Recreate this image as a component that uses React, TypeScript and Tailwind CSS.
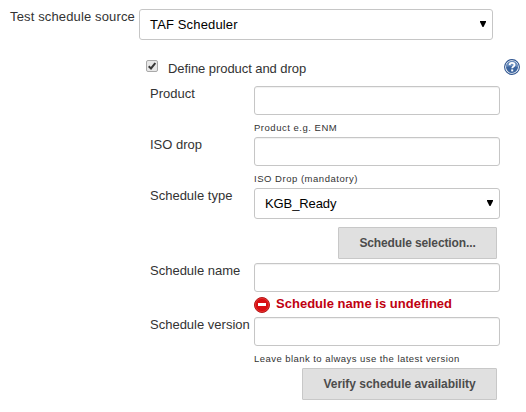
import type { ReactNode } from "react";

function Row({ label, className, children }: { label: string; className: string; children: ReactNode }) {
  return (
    <div className={`flex ${className}`}>
      <div className="w-[104px] shrink-0 whitespace-nowrap leading-4">{label}</div>
      <div className="w-[246px]">{children}</div>
    </div>
  );
}

function Select({ value, className }: { value: string; className: string }) {
  return (
    <div
      className={`flex h-[31px] items-center justify-between rounded-[3px] border border-[#c6c6c6] bg-white pl-[10px] pr-[6px] text-black ${className}`}
    >
      <span className="leading-4">{value}</span>
      <svg width="6" height="6" viewBox="0 0 6 6" className="mb-[2px]">
        <path d="M0 0h6v1L3.5 6h-1L0 1z" fill="#000" />
      </svg>
    </div>
  );
}

function Input() {
  return (
    <input className="block h-[29px] w-[246px] rounded-[3px] border border-[#c6c6c6] bg-white px-2 shadow-[inset_0_1px_1px_rgba(0,0,0,0.06)] outline-none" />
  );
}

function Hint({ children, className }: { children: string; className: string }) {
  return <div className={`mt-[7px] whitespace-nowrap text-[9.5px] leading-[12px] ${className}`}>{children}</div>;
}

function Button({ children, className }: { children: string; className: string }) {
  return (
    <button
      className={`block h-8 rounded-[1px] border border-[#c8c8c8] bg-[#e0e0e0] text-[12px] font-bold leading-4 text-[#4c4c4c] ${className}`}
    >
      {children}
    </button>
  );
}

function HelpIcon() {
  return (
    <svg width="16" height="16" viewBox="0 0 16 16" className="mt-[-1px]">
      <circle cx="8" cy="8" r="7.4" fill="#fff" stroke="#2f5590" strokeWidth="1.1" />
      <circle cx="8" cy="8" r="6" fill="#3c659f" />
      <path d="M2 8a6 6 0 0 1 12 0c-3-1.5-8-1.5-12 0z" fill="#6c8fbe" />
      <path d="M5.6 6.1C5.7 4.4 6.6 3.8 8 3.8s2.5.8 2.5 2.1c0 1.6-2.3 1.7-2.3 3.4" fill="none" stroke="#fff" strokeWidth="1.8" />
      <path d="M7.2 10.4h2v2h-2z" fill="#fff" />
    </svg>
  );
}

function ErrorIcon() {
  return (
    <svg width="16" height="16" viewBox="0 0 16 16" className="mt-px shrink-0">
      <circle cx="8" cy="8" r="7.5" fill="#d90d12" stroke="#b5191b" />
      <circle cx="8" cy="8" r="6.6" fill="none" stroke="#e8483e" strokeWidth="0.6" />
      <path d="M4 6h8v3H4z" fill="#fff" />
    </svg>
  );
}

export default function App() {
  return (
    <div className="h-[412px] w-[526px] overflow-hidden bg-white font-['Liberation_Sans',Arial,sans-serif] text-[13px] text-[#333]">
      <div className="flex pl-[10px] pt-[9px]">
        <div className="w-[129px] shrink-0 whitespace-nowrap leading-4 tracking-[0.14px]">Test schedule source</div>
        <Select value="TAF Scheduler" className="w-[354px] tracking-[0.15px]" />
      </div>

      <div className="mt-5 flex h-[26px] pl-[146px]">
        <div className="flex h-3 w-3 items-center justify-center rounded-[2px] border border-[#a9a9a9] bg-[#e8e8e8]">
          <svg width="8" height="8" viewBox="0 0 8 8">
            <path d="M.7 4.2 3 6.4 7.3 1" fill="none" stroke="#383838" strokeWidth="2" />
          </svg>
        </div>
        <span className="ml-[10px] w-[336px] leading-[18px] tracking-[-0.06px]">Define product and drop</span>
        <HelpIcon />
      </div>

      <div className="pl-[150px]">
        <Row label="Product" className="h-[51px]">
          <Input />
          <Hint className="tracking-[0.52px]">Product e.g. ENM</Hint>
        </Row>
        <Row label="ISO drop" className="h-[51px]">
          <Input />
          <Hint className="tracking-[0.52px]">ISO Drop (mandatory)</Hint>
        </Row>
        <Row label="Schedule type" className="h-[75px]">
          <Select value="KGB_Ready" className="w-[246px] tracking-[-0.1px]" />
          <Button className="ml-[84px] mt-2 w-[159px] tracking-[-0.12px]">Schedule selection...</Button>
        </Row>
        <Row label="Schedule name" className="h-[54px]">
          <Input />
          <div className="mt-1 flex gap-[6px] whitespace-nowrap font-bold leading-4 tracking-[0.02px] text-[#c00010]">
            <ErrorIcon />
            <span>Schedule name is undefined</span>
          </div>
        </Row>
        <Row label="Schedule version" className="h-[85px]">
          <Input />
          <Hint className="tracking-[0.45px]">Leave blank to always use the latest version</Hint>
          <Button className="ml-[48px] mt-[3px] w-[195px] tracking-[-0.02px]">Verify schedule availability</Button>
        </Row>
      </div>
    </div>
  );
}
